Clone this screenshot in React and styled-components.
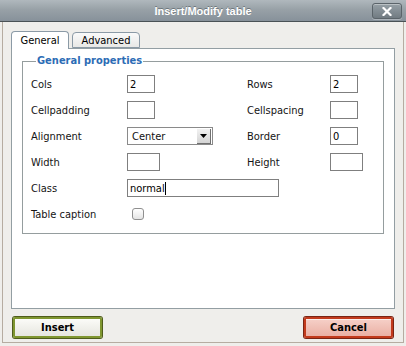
import React from 'react';
import styled, { createGlobalStyle } from 'styled-components';

const GlobalStyle = createGlobalStyle`
  html, body {
    margin: 0;
    padding: 0;
    background: #efeeeb;
  }
  body {
    font-family: "DejaVu Sans Condensed", "DejaVu Sans", sans-serif;
    font-stretch: condensed;
    font-size: 11px;
    color: #111;
  }
`;

const Window = styled.div`
    width: 406px;
    height: 346px;
    display: flex;
    flex-direction: column;
    background: #efeeeb;
    overflow: hidden;
`;

const TitleBar = styled.div`
    height: 21px;
    flex: none;
    display: flex;
    align-items: center;
    justify-content: center;
    position: relative;
    background: linear-gradient(#b0b8bd 0%, #98a1a7 45%, #87919a 100%);
    border-bottom: 1px solid #4a5256;
`;

const Title = styled.div`
    font-family: "Liberation Sans", Arial, sans-serif;
    font-stretch: normal;
    font-weight: bold;
    font-size: 11px;
    color: #fff;
    text-shadow: 0 -1px 0 rgba(60, 70, 76, 0.5);
`;

const CloseButton = styled.div`
    position: absolute;
    right: 4px;
    top: 3px;
    width: 28px;
    height: 14px;
    border-radius: 3px;
    border: 1px solid #5b646a;
    background: linear-gradient(#96a0a6, #717b82);
    box-shadow: inset 0 1px 0 rgba(255, 255, 255, 0.35), 0 1px 0 rgba(255, 255, 255, 0.3);
    display: flex;
    align-items: center;
    justify-content: center;
`;

const Frame = styled.div`
    flex: 1;
    margin: 0 2px 3px 2px;
    border: 1px solid #b6aca1;
    border-top: none;
    padding: 8px 8px 4px 8px;
    display: flex;
    flex-direction: column;
`;

const Tabs = styled.div`
    display: flex;
    align-items: flex-end;
    gap: 3px;
    height: 18px;
`;

const Tab = styled.div`
    width: ${p => p.$w}px;
    height: ${p => (p.$active ? '18px' : '16px')};
    display: flex;
    align-items: center;
    justify-content: center;
    border: 1px solid #8b9aa6;
    border-bottom: ${p => (p.$active ? 'none' : '1px solid #8b9aa6')};
    border-radius: 4px 4px 0 0;
    background: ${p => (p.$active ? '#fff' : 'linear-gradient(#fafafa, #e8e8e6)')};
    box-sizing: border-box;
    margin-bottom: ${p => (p.$active ? '-1px' : '0')};
    position: relative;
    z-index: 1;
    color: #000;
`;

const Panel = styled.div`
    height: 261px;
    background: #fff;
    border: 1px solid #939ea3;
    padding: 5px 10px 0 10px;
    box-sizing: border-box;
`;

const Fieldset = styled.fieldset`
    margin: 0;
    border: 1px solid #959d9e;
    padding: 7px 0 10px 8px;
`;

const Legend = styled.legend`
    color: #2c6cb5;
    font-weight: bold;
    padding: 0 1px;
    margin-left: 5px;
    line-height: 14px;
`;

const Grid = styled.div`
    display: grid;
    grid-template-columns: 96px 120px 83px auto;
    grid-auto-rows: 18px;
    row-gap: 8px;
    align-items: center;
`;

const Label = styled.div`
    color: #141414;
`;

const Field = styled.div`
    width: ${p => p.$w}px;
    height: 18px;
    box-sizing: border-box;
    border: 1px solid #7f7f7f;
    padding: 0 2px;
    display: flex;
    align-items: center;
    background: #fff;
    color: #000;
    grid-column: ${p => p.$span || 'auto'};
`;

const Caret = styled.span`
    display: inline-block;
    width: 1px;
    height: 13px;
    background: #000;
`;

const Select = styled.div`
    width: 86px;
    height: 18px;
    box-sizing: border-box;
    border: 1px solid #8a8a8a;
    padding: 0 1px 0 4px;
    display: flex;
    align-items: center;
    justify-content: space-between;
    background: #fff;
`;

const SelectArrow = styled.div`
    width: 14px;
    height: 15px;
    box-sizing: border-box;
    background: linear-gradient(#f2f2f2, #d4d4d4);
    border-right: 1px solid #707070;
    border-bottom: 1px solid #707070;
    display: flex;
    align-items: center;
    justify-content: center;
`;

const Checkbox = styled.div`
    width: 12px;
    height: 12px;
    margin-left: 5px;
    box-sizing: border-box;
    border: 1px solid #8f8f8f;
    border-radius: 3px;
    background: linear-gradient(#fff, #e4e4e4);
`;

const Footer = styled.div`
    display: flex;
    justify-content: space-between;
    padding: 8px 2px 0 2px;
`;

const Button = styled.div`
    width: 89px;
    height: 21px;
    box-sizing: border-box;
    display: flex;
    align-items: center;
    justify-content: center;
    font-weight: bold;
    color: #000;
    border: 2px solid ${p => p.$border};
    border-radius: 2px;
    background: ${p => p.$bg};
    box-shadow: 0 0 0 1px ${p => p.$outer}, inset 0 1px 0 rgba(255, 255, 255, 0.6);
`;

const App = () => {
    return (
        <>
            <GlobalStyle />
            <Window>
                <TitleBar>
                    <Title>Insert/Modify table</Title>
                    <CloseButton>
                        <svg width="10" height="9" viewBox="0 0 10 9">
                            <path d="M1.5 1 L8.5 8 M8.5 1 L1.5 8" stroke="#fff" strokeWidth="2.2" strokeLinecap="square" />
                        </svg>
                    </CloseButton>
                </TitleBar>
                <Frame>
                    <Tabs>
                        <Tab $active $w={58}>General</Tab>
                        <Tab $w={68}>Advanced</Tab>
                    </Tabs>
                    <Panel>
                        <Fieldset>
                            <Legend>General properties</Legend>
                            <Grid>
                                <Label>Cols</Label>
                                <Field $w={28}>2</Field>
                                <Label>Rows</Label>
                                <Field $w={28}>2</Field>

                                <Label>Cellpadding</Label>
                                <Field $w={28} />
                                <Label>Cellspacing</Label>
                                <Field $w={28} />

                                <Label>Alignment</Label>
                                <Select>
                                    <span>Center</span>
                                    <SelectArrow>
                                        <svg width="7" height="4" viewBox="0 0 7 4">
                                            <path d="M0 0 H7 L3.5 4 Z" fill="#000" />
                                        </svg>
                                    </SelectArrow>
                                </Select>
                                <Label>Border</Label>
                                <Field $w={28}>0</Field>

                                <Label>Width</Label>
                                <Field $w={33} />
                                <Label>Height</Label>
                                <Field $w={33} />

                                <Label>Class</Label>
                                <Field $w={152} $span="span 3">normal<Caret /></Field>

                                <Label>Table caption</Label>
                                <Checkbox />
                            </Grid>
                        </Fieldset>
                    </Panel>
                    <Footer>
                        <Button $border="#7f9630" $outer="#4f5c1c" $bg="linear-gradient(#fbfbf8, #e6e6df)">Insert</Button>
                        <Button $border="#c23a1c" $outer="#7a2414" $bg="linear-gradient(#f6d0c8, #eab0a4)">Cancel</Button>
                    </Footer>
                </Frame>
            </Window>
        </>
    );
};

export default App;
